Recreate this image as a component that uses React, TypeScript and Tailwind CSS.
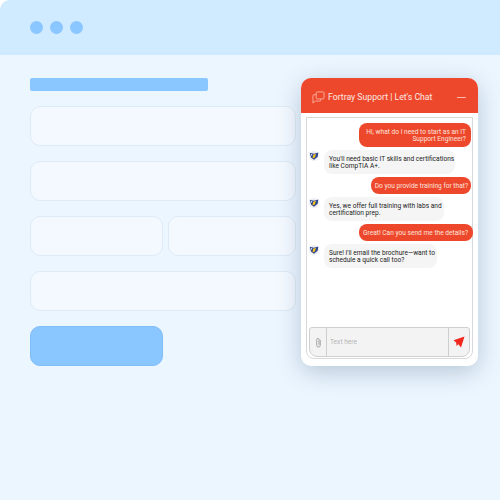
function Field({ className = "" }: { className?: string }) {
  return <div className={`h-[40px] rounded-[10px] border border-[#deeaf6] bg-[#f4f9ff] ${className}`} />;
}

function Avatar() {
  return (
    <svg viewBox="0 0 12 12" className="mt-[1px] h-[10px] w-[10px] shrink-0">
      <circle cx="6" cy="6" r="6" fill="#eeeef2" />
      <path d="M0.8 2.2 L6 3.4 L11.2 1.8 L10.4 7 L6 10.5 L2.6 8 Z" fill="#2c4690" />
      <path d="M5 4.5 L8.4 3.2 L7 7.8 L4.2 9 Z" fill="#f6c21c" />
      <path d="M2 3.2 L4 4 L3.4 6.4 Z" fill="#e6e9f2" />
    </svg>
  );
}

function Sent({ text, className }: { text: string; className: string }) {
  return (
    <div className="flex justify-end">
      <div className={`whitespace-pre-line rounded-[8px] bg-[#ee482c] pb-[4px] pt-[6px] text-right text-[6.6px] leading-[7px] text-[#fde4de] ${className}`}>
        {text}
      </div>
    </div>
  );
}

function Received({ text, className }: { text: string; className: string }) {
  return (
    <div className="flex gap-[5px]">
      <Avatar />
      <div className={`whitespace-pre-line rounded-[8px] bg-[#f5f5f5] pb-[4px] pl-[5px] pt-[6px] text-[6.6px] leading-[7px] text-[#222222] ${className}`}>
        {text}
      </div>
    </div>
  );
}

function ChatWidget() {
  return (
    <div className="absolute left-[301px] top-[78px] flex h-[288px] w-[177px] flex-col overflow-hidden rounded-[10px] bg-white shadow-[0_6px_24px_rgba(70,100,130,0.32)]">
      <div className="flex h-[35px] shrink-0 items-center bg-[#ee482c] pl-[11px] pr-[12px] pt-[4px] text-white">
        <svg viewBox="0 0 14 14" className="h-[13px] w-[13px] shrink-0" fill="none" stroke="#f9b9ab" strokeWidth="0.9">
          <rect x="4.5" y="1" width="8.5" height="7.5" rx="1" />
          <path d="M4.5 4 H2 a1 1 0 0 0 -1 1 V13 L3.5 10.8 H8.5 a1 1 0 0 0 1 -1 V8.5" />
        </svg>
        <span className="ml-[3px] whitespace-nowrap text-[8.7px] text-[#fde9e4]">Fortray Support | Let's Chat</span>
        <div className="ml-auto h-[1.5px] w-[9px] bg-[#f9b9ab]" />
      </div>
      <div className="mx-[5px] mt-[4px] flex h-[242px] flex-col rounded-b-[8px] border border-[#d8d8d8] px-[2px] pb-[1px] pt-[5px]">
        <div className="-mr-[1px] flex flex-1 flex-col gap-[3px]">
          <Sent text={"Hi, what do I need to start as an IT\nSupport Engineer?"} className="w-[112px] pr-[5px]" />
          <Received text={"You'll need basic IT skills and certifications\nlike CompTIA A+."} className="w-[131px]" />
          <Sent text="Do you provide training for that?" className="w-[100px] pr-[3px]" />
          <Received text={"Yes, we offer full training with labs and\ncertification prep."} className="w-[120px]" />
          <div className="-mr-[2px]">
            <Sent text="Great! Can you send me the details?" className="w-[114px] pr-[5px]" />
          </div>
          <Received text={"Sure! I'll email the brochure—want to\nschedule a quick call too?"} className="w-[113px]" />
        </div>
        <div className="flex h-[30px] shrink-0 rounded-b-[8px] rounded-t-[3px] border border-[#cfcfcf] bg-[#f3f3f3]">
          <div className="flex w-[17px] items-center justify-center border-r border-[#cfcfcf]">
            <svg viewBox="0 0 8 12" className="h-[11px] w-[7px]" fill="none" stroke="#8f8f8f" strokeWidth="0.9">
              <path d="M6 3 V9.2 a2 2 0 0 1 -4 0 V2.6 a1.3 1.3 0 0 1 2.6 0 V8.6" />
            </svg>
          </div>
          <div className="flex flex-1 items-center pl-[3px] pt-[2px] text-[6.6px] text-[#b5b5b5]">Text here</div>
          <div className="flex w-[21px] items-center justify-center border-l border-[#cfcfcf]">
            <svg viewBox="0 0 12 12" className="h-[12px] w-[12px]" fill="#f0281e">
              <path d="M11.5 0.5 L0.5 4.2 L3.2 6.4 L3.6 10 L5.4 8.2 L8 11.5 Z" />
            </svg>
          </div>
        </div>
      </div>
    </div>
  );
}

export default function App() {
  return (
    <div className="relative h-[500px] w-[500px] overflow-hidden bg-white font-['Roboto',sans-serif]">
      <div className="flex h-full flex-col overflow-hidden rounded-tl-[10px] bg-[#ecf6ff]">
        <div className="flex h-[55px] shrink-0 items-center gap-[7px] bg-[#d0eaff] pl-[30px]">
          <div className="h-[13px] w-[13px] rounded-full bg-[#8ac6ff]" />
          <div className="h-[13px] w-[13px] rounded-full bg-[#8ac6ff]" />
          <div className="h-[13px] w-[13px] rounded-full bg-[#8ac6ff]" />
        </div>
        <div className="flex w-[296px] flex-col pl-[30px] pt-[23px]">
          <div className="h-[13px] w-[178px] rounded-[2px] bg-[#8ac6ff]" />
          <Field className="mt-[15px]" />
          <Field className="mt-[15px]" />
          <div className="mt-[15px] flex gap-[5px]">
            <Field className="w-[133px]" />
            <Field className="flex-1" />
          </div>
          <Field className="mt-[15px]" />
          <div className="mt-[15px] h-[40px] w-[133px] rounded-[10px] border border-[#7fbdf8] bg-[#8ac6ff]" />
        </div>
      </div>
      <ChatWidget />
    </div>
  );
}
